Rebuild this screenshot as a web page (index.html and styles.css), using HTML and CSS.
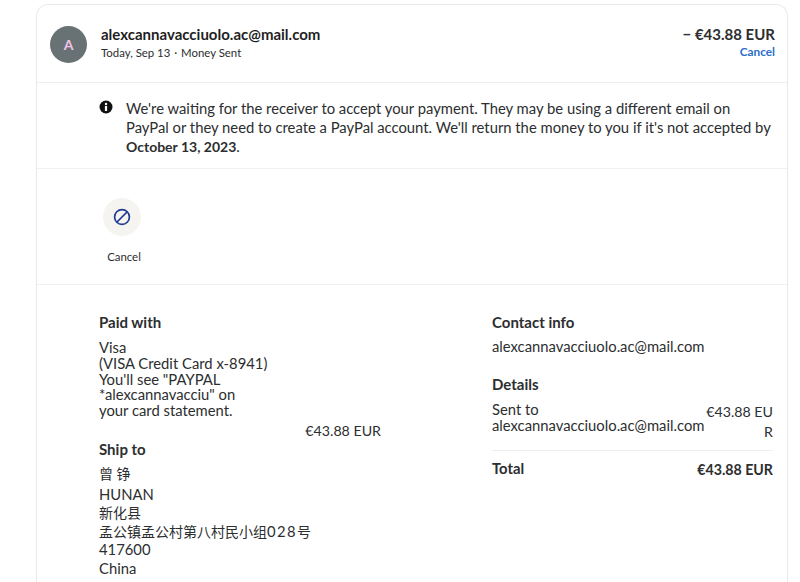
FILE: index.html
```html
<!DOCTYPE html>
<html lang="en">
<head>
    <meta charset="UTF-8">
    <meta name="viewport" content="width=device-width, initial-scale=1.0">
    <title>Transaction details</title>
    <link rel="stylesheet" href="styles.css">
</head>
<body>
    <div class="card">
        <!-- Summary -->
        <div class="summary">
            <div class="avatar">A</div>
            <div class="summary-text">
                <div class="name">alexcannavacciuolo.ac@mail.com</div>
                <div class="meta">Today, Sep 13 <span class="meta-dot">·</span> Money Sent</div>
            </div>
            <div class="summary-amount">
                <div class="amount">− €43.88 EUR</div>
                <a class="cancel-link" href="#">Cancel</a>
            </div>
        </div>

        <!-- Notice -->
        <div class="notice">
            <svg class="info-icon" viewBox="0 0 14 14" width="14" height="14">
                <circle cx="7" cy="7" r="6.5" fill="#111"/>
                <circle cx="7" cy="4" r="1.2" fill="#fff"/>
                <rect x="5.9" y="6" width="2.2" height="5" fill="#fff"/>
            </svg>
            <p>We're waiting for the receiver to accept your payment. They may be using a different email on PayPal or they need to create a PayPal account. We'll return the money to you if it's not accepted by <b>October 13, 2023</b>.</p>
        </div>

        <!-- Actions -->
        <div class="actions">
            <div class="action">
                <div class="action-circle">
                    <svg viewBox="0 0 18 18" width="18" height="18">
                        <circle cx="9" cy="9" r="7.4" fill="none" stroke="#1f3a93" stroke-width="1.7"/>
                        <line x1="4" y1="14" x2="14" y2="4" stroke="#1f3a93" stroke-width="1.7"/>
                    </svg>
                </div>
                <div class="action-label">Cancel</div>
            </div>
        </div>

        <!-- Details -->
        <div class="details">
            <div class="col-left">
                <h3>Paid with</h3>
                <div class="pay-text">Visa<br>(VISA Credit Card x-8941)<br>You'll see "PAYPAL<br>*alexcannavacciu" on<br>your card statement.</div>
                <div class="pay-amount">€43.88 EUR</div>
                <h3 class="ship-title">Ship to</h3>
                <div class="ship-name"><span class="cjk">曾 铮</span></div>
                <div class="ship-text">HUNAN<br><span class="cjk">新化县</span><br><span class="cjk">孟公镇孟公村第八村民小组</span><span class="addr-num">028</span><span class="cjk">号</span><br>417600<br>China</div>
            </div>
            <div class="col-right">
                <h3>Contact info</h3>
                <div class="contact">alexcannavacciuolo.ac@mail.com</div>
                <h3 class="details-title">Details</h3>
                <div class="line-row">
                    <div class="line-label">Sent to<br>alexcannavacciuolo.ac@mail.com</div>
                    <div class="line-value">€43.88 EUR</div>
                </div>
                <div class="total-row">
                    <div class="total-label">Total</div>
                    <div class="total-value">€43.88 EUR</div>
                </div>
            </div>
        </div>
    </div>
</body>
</html>
```

FILE: styles.css
```css
html, body {
    height: 100%;
    overflow: hidden;
}
body {
    margin: 0;
    padding: 4px 12px 0 36px;
    font-family: "Lato", "Noto Sans CJK SC", sans-serif;
    font-size: 14.8px;
    color: #2c2e2f;
    background-color: #fff;
}
.card {
    border: 1px solid #e9e9e7;
    border-bottom: none;
    border-radius: 12px 12px 0 0;
    height: 620px;
}
.summary {
    display: flex;
    align-items: flex-start;
    height: 77px;
    padding: 0 12px 0 13px;
    border-bottom: 1px solid #eeeeec;
}
.avatar {
    width: 37px;
    height: 37px;
    margin-top: 21px;
    border-radius: 50%;
    background-color: #687173;
    color: #f0c4ea;
    font-size: 14px;
    font-weight: 700;
    display: flex;
    align-items: center;
    justify-content: center;
}
.summary-text {
    flex: 1;
    margin-left: 14px;
    padding-top: 20px;
}
.name {
    font-size: 15px;
    font-weight: 700;
    line-height: 18px;
    color: #1f1f1f;
}
.meta {
    font-size: 11.4px;
    line-height: 16px;
    margin-top: 2px;
}
.meta-dot {
    margin: 0 1px;
}
.summary-amount {
    padding-top: 20px;
    text-align: right;
}
.amount {
    font-size: 15px;
    font-weight: 700;
    line-height: 18px;
}
.cancel-link {
    display: block;
    font-size: 11.8px;
    font-weight: 700;
    line-height: 18px;
    color: #2a6fc9;
    text-decoration: none;
}
.notice {
    display: flex;
    align-items: flex-start;
    height: 85px;
    padding: 0 12px 0 62px;
    border-bottom: 1px solid #f0f0ee;
}
.info-icon {
    flex: none;
    margin-top: 17px;
}
.notice p {
    margin: 16px 0 0 13px;
    line-height: 19px;
}
.notice b {
    font-size: 14px;
}
.actions {
    height: 115px;
    border-bottom: 1px solid #f0f0ee;
    padding-left: 66px;
}
.action {
    width: 42px;
    padding-top: 29px;
    text-align: center;
}
.action-circle {
    width: 38px;
    height: 38px;
    border-radius: 50%;
    background-color: #f5f4f0;
    display: flex;
    align-items: center;
    justify-content: center;
}
.action-label {
    margin-top: 13px;
    font-size: 11.4px;
    line-height: 16px;
}
.details {
    display: flex;
    padding: 28px 14px 0 62px;
}
h3 {
    margin: 0;
    font-size: 15px;
    font-weight: 700;
    line-height: 18px;
}
.col-left {
    width: 282px;
    margin-right: 111px;
}
.col-right {
    flex: 1;
}
.cjk {
    font-size: 14px;
    line-height: 1;
}
.addr-num {
    letter-spacing: 1.4px;
}
.pay-text {
    margin-top: 9px;
    line-height: 15.8px;
}
.pay-amount {
    margin-top: 2px;
    text-align: right;
    font-size: 14.2px;
    line-height: 20px;
}
.ship-title {
    margin-top: -1px;
}
.ship-name {
    margin-top: 3px;
    line-height: 24px;
}
.ship-text {
    line-height: 18.5px;
}
.contact {
    margin-top: 6px;
    line-height: 18px;
}
.details-title {
    margin-top: 20px;
}
.line-row {
    display: flex;
    justify-content: space-between;
    margin-top: 8px;
    padding-bottom: 8px;
    border-bottom: 1px solid #eeeeec;
}
.line-label {
    line-height: 16px;
    white-space: nowrap;
}
.line-value {
    width: 67px;
    padding-top: 1px;
    text-align: right;
    font-size: 14.2px;
    word-break: break-all;
    line-height: 20px;
}
.total-row {
    display: flex;
    justify-content: space-between;
    margin-top: 8px;
    font-weight: 700;
}
.total-value {
    margin-top: 2px;
    font-size: 14.2px;
}
```
